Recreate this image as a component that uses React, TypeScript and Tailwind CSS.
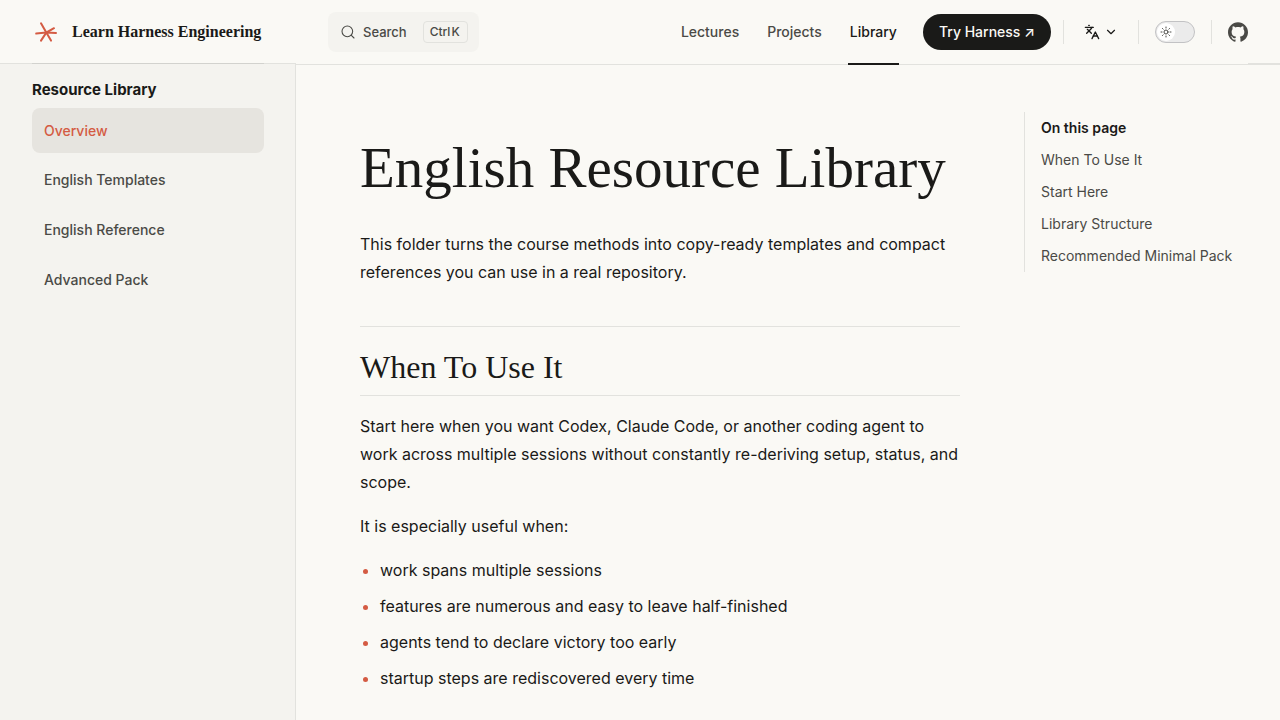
import { useState } from "react";
import { ChevronDown, Languages, Search, Sun } from "lucide-react";
import { SiGithub } from "react-icons/si";

const sidebarLinks = ["English Templates", "English Reference", "Advanced Pack"];
const outline = ["When To Use It", "Start Here", "Library Structure", "Recommended Minimal Pack"];
const useCases = [
  "work spans multiple sessions",
  "features are numerous and easy to leave half-finished",
  "agents tend to declare victory too early",
  "startup steps are rediscovered every time",
];

function Logo() {
  return (
    <svg viewBox="0 0 32 32" className="size-8 shrink-0" aria-hidden="true">
      <g stroke="#d45b43" strokeWidth="2" strokeLinecap="round" fill="none">
        <path d="M4.2 17.6 L14.3 16.6 L24 16.9" />
        <path d="M9 7.3 L14.3 16.6 L19 24.6" />
        <path d="M9 24.6 L14.3 16.6 L22 12.2" />
      </g>
    </svg>
  );
}

function Divider() {
  return <span className="h-6 w-px bg-[#e2e2de]" />;
}

function Header() {
  const [dark, setDark] = useState(false);
  return (
    <header className="flex items-start">
      <div className="h-16 w-74 shrink-0 border-b border-[#e2e2de] px-8">
        <a href="#home" className="flex h-16 items-center gap-2 border-b border-[#d2d2ce]">
          <Logo />
          <span className="whitespace-nowrap font-['Liberation_Serif',serif] text-base font-bold leading-6">
            Learn Harness Engineering
          </span>
        </a>
      </div>
      <div className="flex h-[65px] grow items-start justify-between border-b border-[#e2e2de] pl-8">
        <button
          type="button"
          className="mt-3 flex h-10 items-center rounded-lg bg-[#f4f3ef] pl-3 pr-[11px] text-sm font-medium text-[#4a4a46]"
        >
          <Search className="mr-[7px] size-4" strokeWidth={1.6} />
          <span className="mr-4 text-[13px]">Search</span>
          <kbd className="flex h-[22px] items-center rounded border border-[#e2e2de] pl-1.5 pr-[7px] font-[Inter,sans-serif] text-xs">
            Ctrl&#8202;K
          </kbd>
        </button>
        <div className="flex h-16 items-center">
          <nav className="flex h-16 items-start text-sm font-medium leading-16 text-[#4a4a46]">
            <a href="#lectures" className="px-3.5">Lectures</a>
            <a href="#projects" className="px-3.5">Projects</a>
            <a href="#library" aria-current="page" className="ml-3 h-[65px] border-b-2 border-[#1a1a18] px-0.5 text-[#1a1a18]">
              Library
            </a>
          </nav>
          <a
            href="#try"
            className="ml-6 mr-3 flex h-9 items-center rounded-full bg-[#1a1a18] px-4 text-sm font-medium text-[#faf9f5]"
          >
            Try Harness ↗
          </a>
          <Divider />
          <button type="button" aria-label="Change language" className="flex items-center gap-1 px-5">
            <Languages className="size-4" />
            <ChevronDown className="size-3.5" />
          </button>
          <Divider />
          <button
            type="button"
            role="switch"
            aria-checked={dark}
            aria-label="Dark theme"
            onClick={() => setDark(!dark)}
            className="mx-4 flex h-[22px] w-10 items-center rounded-full border border-[#c2c2c4] bg-[#ebebeb] p-px"
          >
            <span className="flex size-[18px] items-center justify-center rounded-full bg-white text-[#4a4a46]">
              <Sun className="size-3" />
            </span>
          </button>
          <Divider />
          <a href="#github" aria-label="GitHub" className="ml-4 text-[#4a4a46]">
            <SiGithub className="size-5" />
          </a>
          <span className="h-16 w-8 border-b border-[#e2e2de]" />
        </div>
      </div>
    </header>
  );
}

export default function App() {
  return (
    <div className="flex min-h-screen flex-col bg-[#faf9f5] font-[Inter,sans-serif] text-[#1a1a18]">
      <Header />
      <div className="-mt-px flex grow">
        <aside className="w-74 shrink-0 border-r border-[#e2e2de] bg-[#f4f3ef] pl-8 pr-[31px] pt-3.5">
          <h2 className="text-[15px] font-bold leading-6">Resource Library</h2>
          <nav className="mt-1.5 text-sm font-medium text-[#4a4a46]">
            <a href="#overview" className="mb-1 flex h-[45px] items-center rounded-lg bg-[#e6e4df] px-3 text-[#d45b43]">
              Overview
            </a>
            {sidebarLinks.map((label) => (
              <a key={label} href="#library" className="mb-[5px] flex h-[45px] items-center px-3">
                {label}
              </a>
            ))}
          </nav>
        </aside>
        <div className="flex grow items-start justify-between gap-16 pl-16 pr-8 pt-12">
          <main className="max-w-[600px] grow pt-6 leading-7">
            <h1 className="whitespace-nowrap font-['Liberation_Serif',serif] text-[57px] leading-16">
              English Resource Library
            </h1>
            <p className="mt-[30px]">
              This folder turns the course methods into copy-ready templates and compact references you can use in a
              real repository.
            </p>
            <h2 className="mb-4 mt-10 border-y border-[#e2e2de] pb-2 pt-5 font-['Liberation_Serif',serif] text-[32px] leading-10">
              When To Use It
            </h2>
            <p>
              Start here when you want Codex, Claude Code, or another coding agent to work across multiple sessions
              without constantly re-deriving setup, status, and scope.
            </p>
            <p className="my-4">It is especially useful when:</p>
            <ul className="flex list-disc flex-col gap-2 pl-5 marker:text-[#d45b43]">
              {useCases.map((item) => (
                <li key={item}>{item}</li>
              ))}
            </ul>
          </main>
          <nav
            aria-labelledby="outline-title"
            className="flex w-56 shrink-0 flex-col border-l border-[#e2e2de] pl-4 text-sm leading-8 text-[#4a4a46]"
          >
            <h2 id="outline-title" className="font-semibold leading-8 text-[#1a1a18]">
              On this page
            </h2>
            {outline.map((label) => (
              <a key={label} href="#section" className="whitespace-nowrap">
                {label}
              </a>
            ))}
          </nav>
        </div>
      </div>
    </div>
  );
}
